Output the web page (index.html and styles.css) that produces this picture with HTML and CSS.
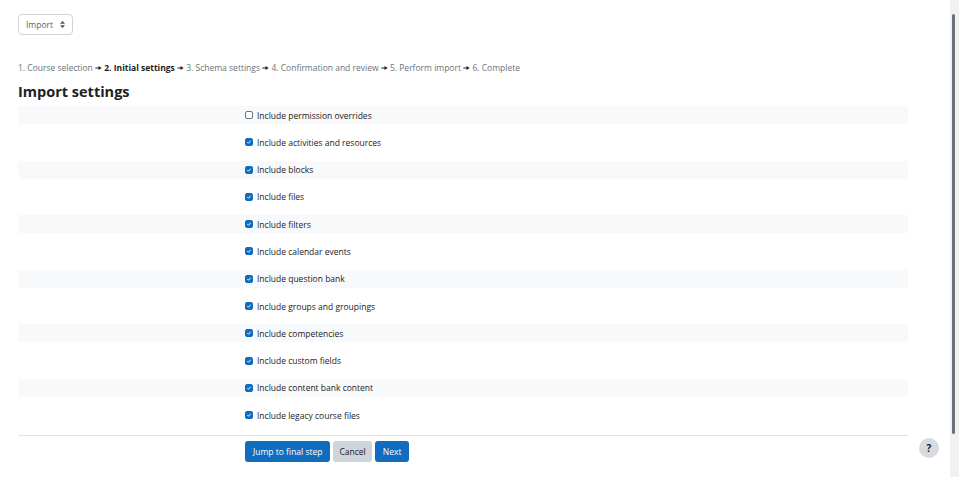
FILE: index.html
```html
<!DOCTYPE html>
<html lang="en">
<head>
    <meta charset="UTF-8">
    <meta name="viewport" content="width=device-width, initial-scale=1.0">
    <title>Import settings</title>
    <link rel="stylesheet" href="styles.css">
</head>
<body>
    <div class="window">
        <div class="page">
            <div class="select">
                <span>Import</span>
                <svg class="caret" width="5" height="7" viewBox="0 0 5 7"><path d="M2.5 0 L5 2.8 H0 Z M2.5 7 L5 4.2 H0 Z" fill="#495057"/></svg>
            </div>

            <div class="steps">
                <span>1. Course selection</span> <svg class="sep" viewBox="0 0 8 5"><path d="M0 2 H4 V0 L8 2.5 L4 5 V3 H0 Z"/></svg>
                <b>2. Initial settings</b> <svg class="sep" viewBox="0 0 8 5"><path d="M0 2 H4 V0 L8 2.5 L4 5 V3 H0 Z"/></svg>
                <span>3. Schema settings</span> <svg class="sep" viewBox="0 0 8 5"><path d="M0 2 H4 V0 L8 2.5 L4 5 V3 H0 Z"/></svg>
                <span>4. Confirmation and review</span> <svg class="sep" viewBox="0 0 8 5"><path d="M0 2 H4 V0 L8 2.5 L4 5 V3 H0 Z"/></svg>
                <span>5. Perform import</span> <svg class="sep" viewBox="0 0 8 5"><path d="M0 2 H4 V0 L8 2.5 L4 5 V3 H0 Z"/></svg>
                <span>6. Complete</span>
            </div>

            <h2>Import settings</h2>

            <div class="settings">
                <div class="row"><span class="cb"></span>Include permission overrides</div>
                <div class="row"><span class="cb on"><svg viewBox="0 0 9 9"><path d="M2 4.6 L3.8 6.4 L7 2.6" /></svg></span>Include activities and resources</div>
                <div class="row"><span class="cb on"><svg viewBox="0 0 9 9"><path d="M2 4.6 L3.8 6.4 L7 2.6" /></svg></span>Include blocks</div>
                <div class="row"><span class="cb on"><svg viewBox="0 0 9 9"><path d="M2 4.6 L3.8 6.4 L7 2.6" /></svg></span>Include files</div>
                <div class="row"><span class="cb on"><svg viewBox="0 0 9 9"><path d="M2 4.6 L3.8 6.4 L7 2.6" /></svg></span>Include filters</div>
                <div class="row"><span class="cb on"><svg viewBox="0 0 9 9"><path d="M2 4.6 L3.8 6.4 L7 2.6" /></svg></span>Include calendar events</div>
                <div class="row"><span class="cb on"><svg viewBox="0 0 9 9"><path d="M2 4.6 L3.8 6.4 L7 2.6" /></svg></span>Include question bank</div>
                <div class="row"><span class="cb on"><svg viewBox="0 0 9 9"><path d="M2 4.6 L3.8 6.4 L7 2.6" /></svg></span>Include groups and groupings</div>
                <div class="row"><span class="cb on"><svg viewBox="0 0 9 9"><path d="M2 4.6 L3.8 6.4 L7 2.6" /></svg></span>Include competencies</div>
                <div class="row"><span class="cb on"><svg viewBox="0 0 9 9"><path d="M2 4.6 L3.8 6.4 L7 2.6" /></svg></span>Include custom fields</div>
                <div class="row"><span class="cb on"><svg viewBox="0 0 9 9"><path d="M2 4.6 L3.8 6.4 L7 2.6" /></svg></span>Include content bank content</div>
                <div class="row"><span class="cb on"><svg viewBox="0 0 9 9"><path d="M2 4.6 L3.8 6.4 L7 2.6" /></svg></span>Include legacy course files</div>
            </div>

            <div class="actions">
                <button class="btn primary">Jump to final step</button>
                <button class="btn secondary">Cancel</button>
                <button class="btn primary">Next</button>
            </div>

            <button class="help">?</button>
        </div>
        <div class="scrollbar"><div class="thumb"></div></div>
    </div>
</body>
</html>
```

FILE: styles.css
```css
body { margin: 0; font-family: "Open Sans", "Noto Sans", sans-serif; color: #1d2125; background: #fff; }
.window { display: flex; height: 477px; }
.page { flex: 1; padding: 14px 42px 0 18px; position: relative; }

/* Top select */
.select {
    display: flex; align-items: center; gap: 7px; width: fit-content;
    height: 19px; padding: 0 7px 0 7px;
    border: 1px solid #ced4da; border-radius: 4px;
    font-size: 8.5px; color: #5a6269;
}

/* Step trail */
.steps { margin-top: 27px; font-size: 8.5px; color: #6a737b; white-space: nowrap; }
.steps b { color: #1d2125; font-weight: 700; }
.steps .sep { width: 7px; height: 4px; fill: #1d2125; vertical-align: 1px; }

h2 { margin: 9px 0 5px; font-size: 14.5px; font-weight: 700; }

/* Settings rows */
.settings { display: flex; flex-direction: column; gap: 9.3px; }
.row {
    display: flex; align-items: center; gap: 4px;
    height: 18px; padding-left: 227px;
    font-size: 8.5px;
}
.row:nth-child(odd) { background: #f8f9fa; }

.cb {
    width: 8px; height: 8px; box-sizing: border-box;
    border: 1px solid #6a737b; border-radius: 2px; background: #fff;
    display: inline-flex;
}
.cb.on { background: #0f6cbf; border-color: #0f6cbf; }
.cb svg { width: 100%; height: 100%; }
.cb path { fill: none; stroke: #fff; stroke-width: 1.4; }

/* Buttons */
.actions {
    margin-top: 11px; padding: 5px 0 0 227px;
    border-top: 1px solid #dee2e6;
    display: flex; gap: 3px;
}
.btn {
    height: 21px; padding: 0 8px; border: none; border-radius: 3px;
    font-family: inherit; font-size: 8.5px; cursor: pointer;
}
.primary { background: #0f6cbf; color: #fff; }
.secondary { background: #ced4da; color: #1d2125; padding: 0 6px; }

/* Floating help button */
.help {
    position: absolute; left: 919px; top: 438px;
    width: 20px; height: 20px; border-radius: 50%;
    border: none; background: #d6dbe0; color: #1d2125;
    font-family: inherit; font-size: 10px; font-weight: 700; padding: 0;
}

/* Fake scrollbar */
.scrollbar { width: 7px; background: #f1f1f1; padding: 14px 0 0 2px; }
.thumb { width: 3px; height: 420px; background: #6a737b; border-radius: 2px; }
```
